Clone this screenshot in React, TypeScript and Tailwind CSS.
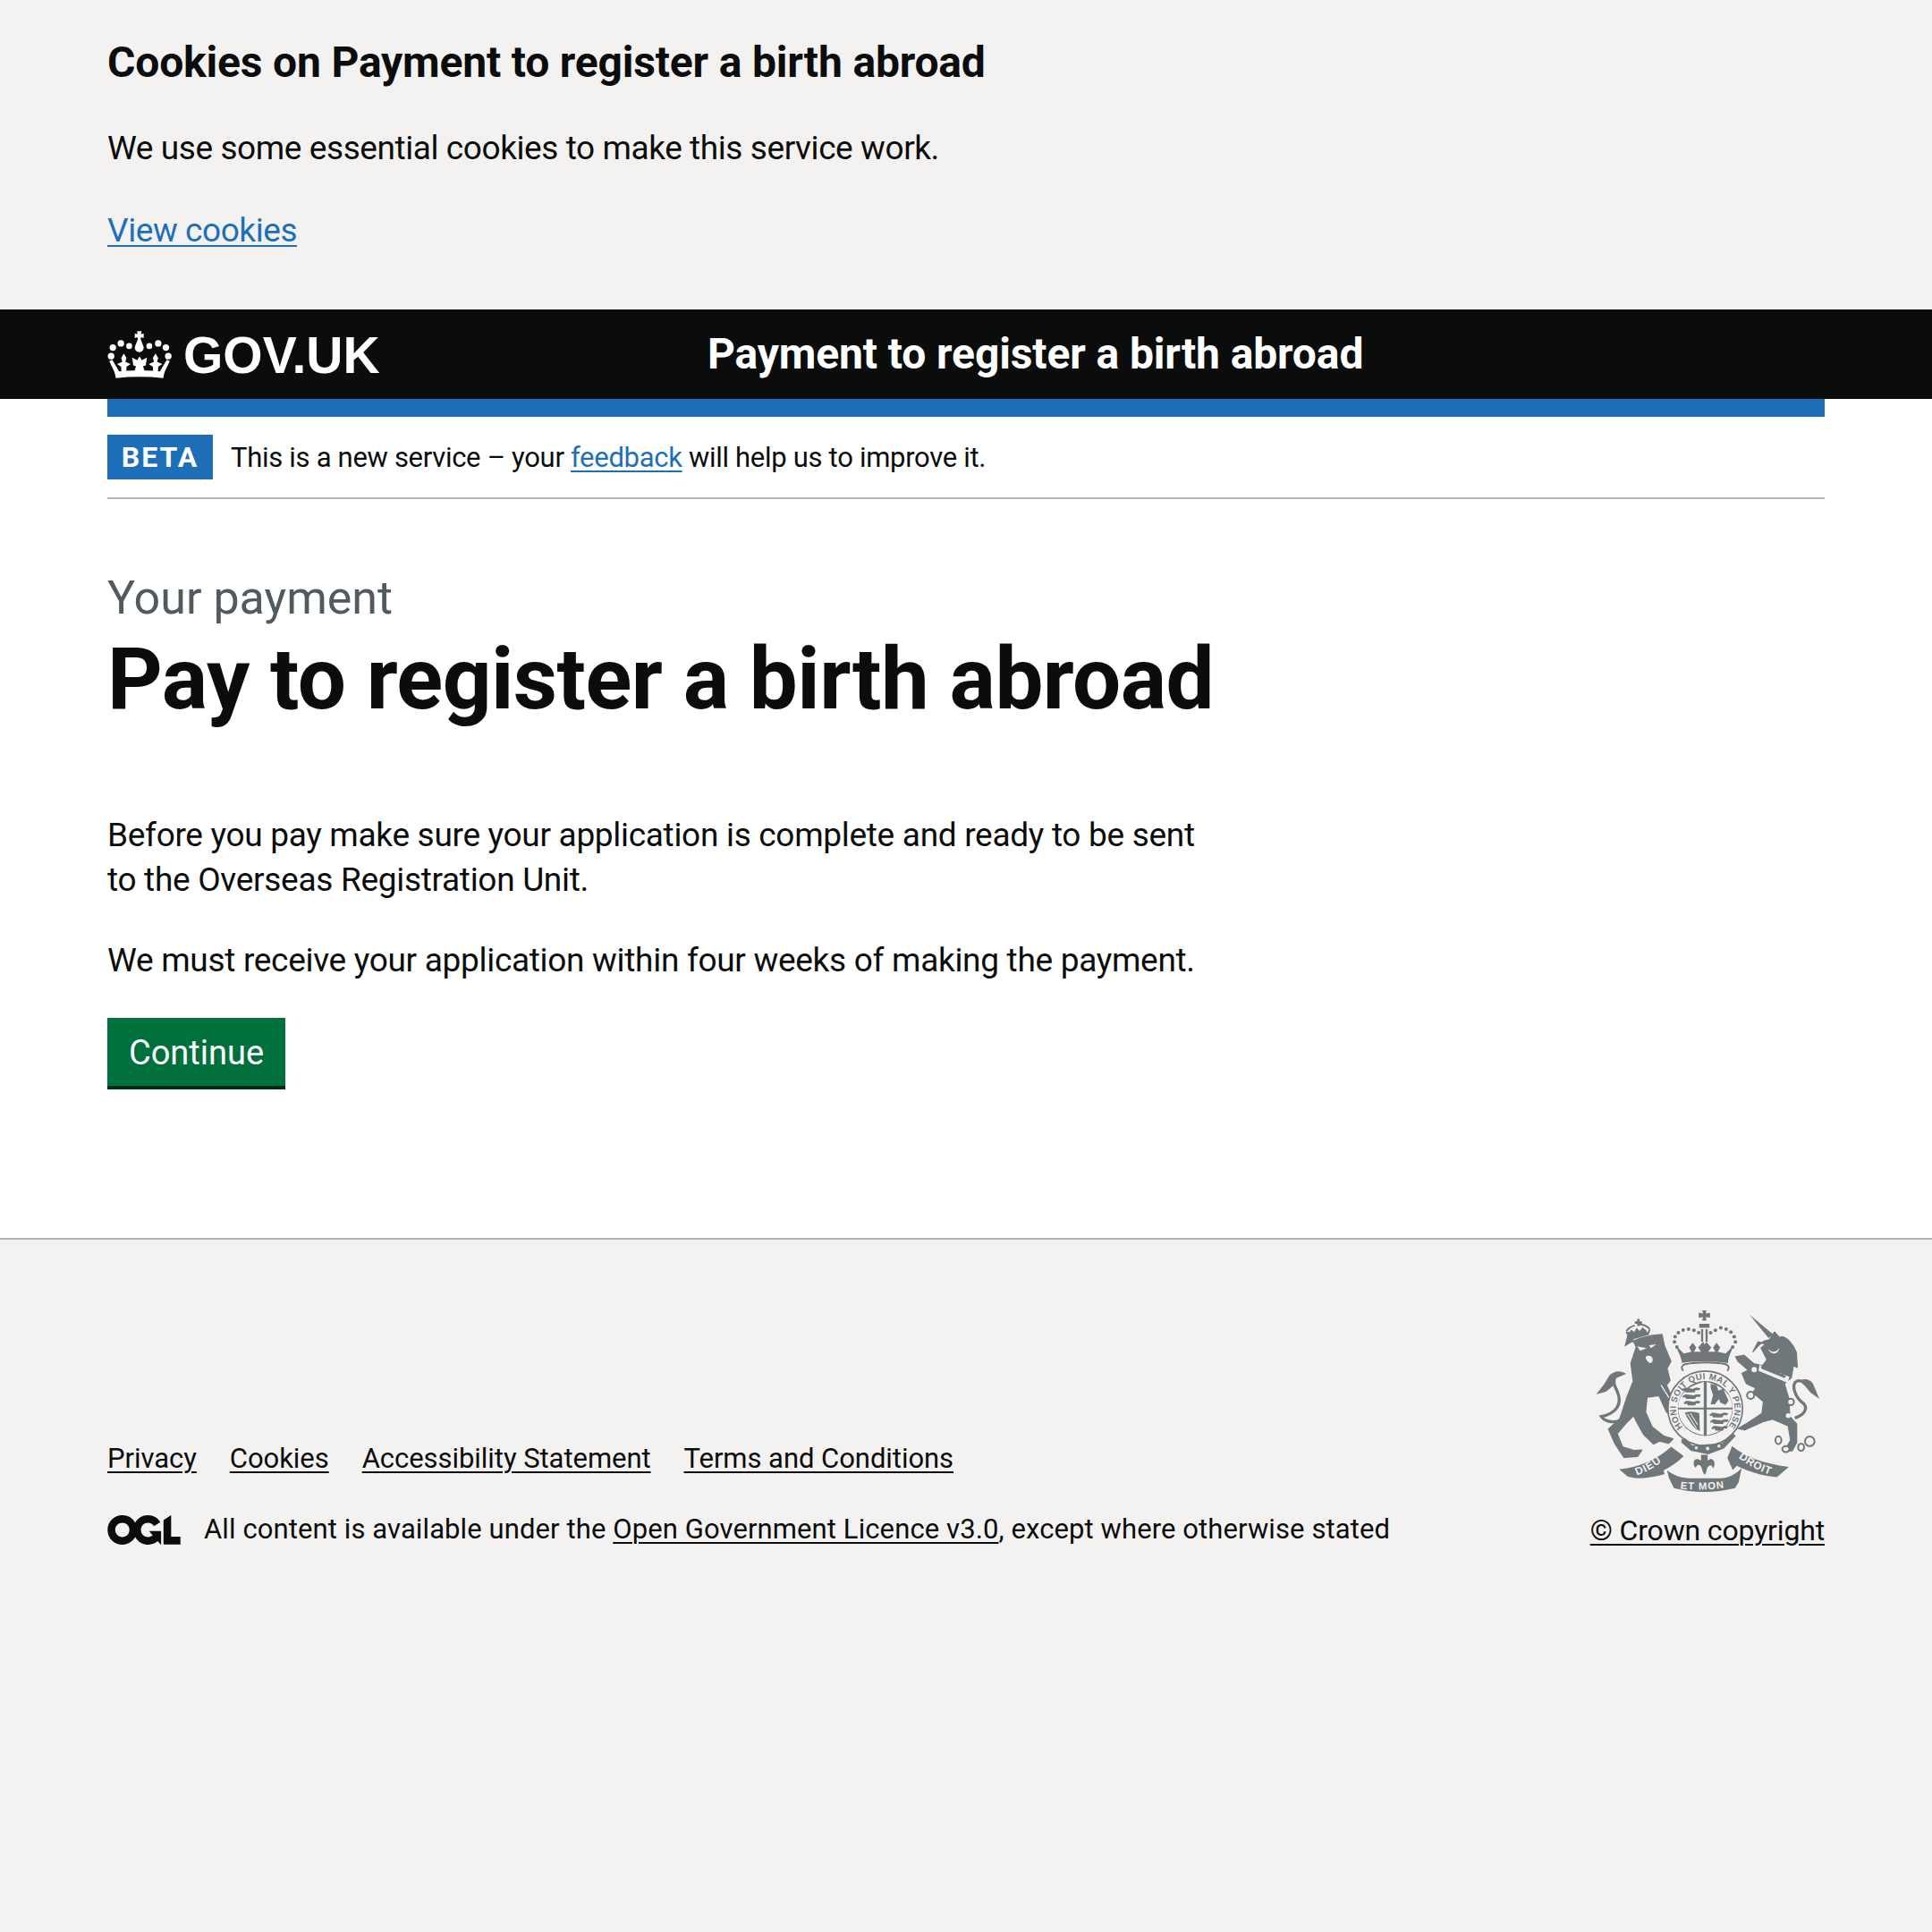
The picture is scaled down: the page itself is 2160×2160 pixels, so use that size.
const font = { fontFamily: 'Roboto, sans-serif' };

function Crown() {
  const fleur = (x: number) =>
    `M${x} 156l9 15-4 13 18 8-14 9-1 24h-16l-1-24-14-9 18-8-4-13z`;
  return (
    <svg viewBox="60 80 216 160" className="w-[72px] h-[53px] shrink-0" fill="currentColor">
      <path d="M160 81h15l-2 10 9-3v16l-9-3-1 8 8 20a15 15 0 1 1-26 0l8-20-1-8-9 3V88l9 3z" />
      <circle cx="72" cy="165" r="11" />
      <circle cx="265" cy="165" r="11" />
      <circle cx="78" cy="136" r="11" />
      <circle cx="257" cy="136" r="11" />
      <circle cx="105" cy="122" r="11" />
      <circle cx="231" cy="122" r="11" />
      <circle cx="133" cy="131" r="10" />
      <circle cx="201" cy="131" r="10" />
      <path d={fleur(115)} />
      <path d={fleur(222)} />
      <path d="M168 166l8 13 17-9-4 26-9 3 8 27h-40l8-27-9-3-4-26 17 9z" />
      <path d="M66 182l10-5 26 44-14 8zM270 182l-10-5-26 44 14 8z" />
      <path d="M84 218q84-10 168 0l-4 21q-80-8-160 0z" />
    </svg>
  );
}

function Ogl() {
  return (
    <svg viewBox="0 0 483.2 195.7" className="w-[82px] h-[33px] shrink-0 mr-[26px]" fill="currentColor">
      <path d="M421.5 142.8V.1l-50.7 32.3v161.1h112.4v-50.7zm-122.3-9.6A47.12 47.12 0 0 1 221 97.8c0-26 21.1-47.1 47.1-47.1 16.7 0 31.4 8.7 39.7 21.8l42.7-27.2A97.63 97.63 0 0 0 268.1 0c-36.5 0-68.3 20.1-85.1 49.7A98 98 0 0 0 97.8 0C43.9 0 0 43.9 0 97.8s43.9 97.8 97.8 97.8c36.5 0 68.3-20.1 85.1-49.7a97.76 97.76 0 0 0 149.6 25.4l19.4 22.2h3v-87.8h-80l24.3 27.5zM97.8 145c-26 0-47.1-21.1-47.1-47.1s21.1-47.1 47.1-47.1 47.2 21 47.2 47S123.8 145 97.8 145" />
    </svg>
  );
}

function Crest() {
  const c = "#6f777b";
  const bg = "#f3f2f1";
  const dots = [[345,172],[337,155],[339,138],[350,124],[366,115],[384,112],[402,116],[418,124],[458,124],[474,116],[492,108],[510,112],[526,122],[537,138],[541,155],[532,172]];
  const lionRows = (x: number, y: number) => (
    <g transform={`translate(${x} ${y})`}>
      <path d="M0 8l10-6 26 4 12-4 14 2-4 7-12 0-4 7-30 0-4-6-8 2z" />
      <path d="M2 30l10-6 26 4 12-4 14 2-4 7-12 0-4 7-30 0-4-6-8 2z" />
      <path d="M6 52l10-6 24 4 12-4 10 2-4 7-10 0-4 7-24 0-4-6-8 2z" />
    </g>
  );
  return (
    <svg viewBox="70 50 755 610" className="w-[252px] h-[204px] mr-[5px]" fill={c}>
      <defs>
        <path id="garter" d="M365 441A98 98 0 1 1 515 441" />
        <path id="dieu" d="M205 604Q265 585 320 535" />
        <path id="mon" d="M350 646Q437 656 526 640" />
        <path id="droit" d="M548 540Q600 582 668 604" />
      </defs>
      {/* Lion's crown */}
      <path d="M176 118c10-12 20-16 28-18M254 112c-8-10-20-14-34-16M176 120l12 26 60-17 6-16" fill="none" stroke={c} strokeWidth="6" />
      <path d="M204 86h8v-8h8v8h8v8h-8v8h-8v-8h-8zM184 128l8-14 10 8 8-14 10 10 10-12 12 10 6 12-62 18z" />
      {/* Lion */}
      <path strokeLinejoin="round" stroke={c} strokeWidth="4" d="M172 168C195 150 245 132 295 130l8 38 22 52-13 24 10 40-12 16 40 90-10 20-30-20-25-55-40 5-5 50 22 50 38 30 32 10-15 15-30-8-20 10-32-30-20-35-15-30-25 25-30 35 18 45 38 12 27-2-15 22-45 3-30-45-22-50 38-35 25-75 20-50-8-60 18-55-25-50z" />
      <path d="M212 170l32 6-22 9zM252 166l24-3-18 13zM240 205c8-6 24-4 24 10 0 8-6 14-12 10-6-4-12-14-12-20z" fill={bg} />
      <path d="M292 300l48 76" stroke={bg} strokeWidth="4" fill="none" />
      <path d="M172 410C140 430 105 425 92 405 140 395 165 365 145 320 128 290 130 265 160 262" fill="none" stroke={c} strokeWidth="10" />
      <path d="M175 262c-20-14-42-8-55 4l-18 30-27 34 32-8 25-20 8-25z" />
      {/* Unicorn */}
      <path d="M588 64l80 66-16 12z" />
      <path strokeLinejoin="round" stroke={c} strokeWidth="4" d="M600 188c15-18 30-38 55-40l17-26 16 18c22-10 47 25 57 50l3 50-13-5-7 40-23 20 15 50 3 60 23 25 0 62-15 28h-25l20-36-8-48-52-22-32 8-62 28-22-5 30-17 50-33 5-40-35-30 10-15-32-15-15-35 22-10-35-30-8-15 28-5 32 28 30 7 15-20-20-40 15-12-25-8z" />
      <path d="M650 178c14 12 24 16 38-2-2 18-24 28-38 2z" fill={bg} />
      <path d="M622 232l100 40-6 20-98-40z" fill={bg} />
      <path d="M626 240l8-10 6 6 8-6 4 8 8-2 4 10 10-2 4 10 10-2 4 10 10-2 2 8 8-2-6 10-76-30z" />
      <g fill={bg} stroke={c} strokeWidth="6">
        <circle cx="604" cy="248" r="12" />
        <circle cx="592" cy="334" r="12" />
        <circle cx="726" cy="356" r="11" />
        <ellipse cx="685" cy="484" rx="10" ry="13" />
        <ellipse cx="710" cy="514" rx="12" ry="10" />
        <ellipse cx="761" cy="508" rx="10" ry="12" />
        <circle cx="790" cy="488" r="16" />
      </g>
      <circle cx="718" cy="402" r="8" fill={bg} />
      <circle cx="695" cy="438" r="8" fill={bg} />
      <path d="M740 410c30-10 45-30 30-48-30-20-40-60-28-72 10-8 22-6 32 6" fill="none" stroke={c} strokeWidth="10" />
      <path d="M760 282c20-6 36 2 42 16l20 48-30-22-20-24z" />
      {/* Royal crown */}
      <path d="M430 48h14l-2 12 14-2v16l-14-2 2 12h-14l2-12-14 2V58l14 2zM420 94h34v14h-34zM426 112h7v42h-7zM441 112h7v42h-7z" />
      {dots.map(([x, y]) => (
        <circle key={`${x}-${y}`} cx={x} cy={y} r="6" />
      ))}
      <path d="M362 226c-2-24-16-40-18-56l24 24 26-6-8-14 12-16 12 16-8 14h24l-10-14 17-20 5 10 5-10 17 20-10 14h24l-8-14 12-16 12 16-8 14 26 6 24-24c-2 16-14 30-16 56-50-8-116-8-162 0z" />
      <path d="M366 252c-8-10-4-20 6-22 40-8 100-8 136 0 10 2 14 12 6 22" fill={bg} stroke={c} strokeWidth="6" />
      {/* Shield and garter */}
      <circle cx="440" cy="378" r="125" fill={bg} stroke={c} strokeWidth="5" />
      <circle cx="440" cy="378" r="92" fill={c} />
      <text fontFamily="'Liberation Sans', sans-serif" fontWeight="700" fontSize="29" fill={c}>
        <textPath href="#garter" textLength="440">HONI SOIT QUI MAL Y PENSE</textPath>
      </text>
      <path d="M435 289v86h-86q2-64 86-86zM445 289q84 22 86 86h-86zM349 381h86v87q-78-14-86-87zM445 381h86q-8 73-86 87z" fill={bg} />
      {lionRows(362, 306)}
      {lionRows(455, 390)}
      <path d="M458 296l20 4 6 18 16-6 18 40-10 14-18-8-4-12-14 18-14 0 8-30-8-26z" />
      <path d="M372 392q24-8 48 2l2 60q-36-16-50-62z" />
      <path d="M380 396l30 48M390 394l24 38M374 404l26 38" stroke={bg} strokeWidth="3" fill="none" />
      <path d="M360 482q10-10 18 0l18 20 100-8 36-34 10 10-40 42-52 20-58-12-32-28z" />
      <circle cx="410" cy="510" r="5" fill={bg} />
      <circle cx="448" cy="512" r="6" fill={bg} />
      <circle cx="486" cy="504" r="5" fill={bg} />
      {/* Fleur de lis */}
      <path d="M426 533h22v20c20-18 30 12 18 26-4-16-14-12-20 0-2 8-2 14-8 22-6-8-8-14-10-24-6-12-14-14-20 0-14-14-6-42 18-24z" />
      {/* Scrolls */}
      <path d="M152 582c70-8 130-36 174-76l42 32c-20 20-44 36-68 48l4 12c-46 14-92 18-124 8z" />
      <path d="M530 504c40 34 100 58 190 70l-40 34c-50-4-100-20-134-38l-14 14-18-40z" />
      <path d="M312 585C330 600 360 612 390 612h100c30 0 55-17 72-34l-10 47-12 20c-70 17-140 17-205 0l-17-35z" />
      <g fontFamily="'Liberation Sans', sans-serif" fontWeight="700" fontSize="36" fill={bg}>
        <text letterSpacing="3"><textPath href="#dieu" startOffset="6">DIEU</textPath></text>
        <text letterSpacing="3" fontSize="34"><textPath href="#mon" startOffset="6">ET MON</textPath></text>
        <text letterSpacing="2"><textPath href="#droit" startOffset="4">DROIT</textPath></text>
      </g>
    </svg>
  );
}

export default function App() {
  return (
    <div className="min-h-[2160px] flex flex-col bg-white text-[#0b0c0c]" style={font}>
      <section className="bg-[#f3f2f1] h-[346px] px-[120px] pt-[40px]">
        <h2 className="text-[48px] leading-[60px] font-bold tracking-[-0.18px]">Cookies on Payment to register a birth abroad</h2>
        <p className="text-[37px] leading-[50px] mt-[41px] tracking-[-0.42px]">We use some essential cookies to make this service work.</p>
        <a className="block text-[37px] leading-[50px] mt-[42px] text-[#1d70b8] underline underline-offset-[4px] decoration-[2px] tracking-[-0.42px]">View cookies</a>
      </section>

      <header className="bg-[#0b0c0c] h-[100px] px-[120px] flex items-center text-white">
        <div className="w-[671px] flex items-center gap-[13px]">
          <Crown />
          <span className="text-[57px] font-bold leading-none mt-[2px]" style={{ fontFamily: '"Liberation Sans", sans-serif' }}>GOV.UK</span>
        </div>
        <span className="text-[48px] font-bold tracking-[-0.12px]">Payment to register a birth abroad</span>
      </header>

      <main className="px-[120px]">
        <div className="h-[20px] bg-[#1d70b8]" />
        <div className="h-[92px] pt-[20px] flex items-start border-b-2 border-[#b1b4b6]">
          <span className="w-[118px] h-[50px] bg-[#1d70b8] text-white text-[32px] font-bold tracking-[2px] flex items-center justify-center">BETA</span>
          <p className="ml-[20px] pt-[1px] text-[31px] leading-[50px] tracking-[-0.3px]">
            This is a new service – your <a className="text-[#1d70b8] underline underline-offset-[4px] decoration-[2px]">feedback</a> will help us to improve it.
          </p>
        </div>

        <div className="pt-[81px]">
          <span className="block text-[52px] leading-[60px] text-[#505a5f]">Your payment</span>
          <h1 className="text-[96px] leading-[100px] font-bold mt-[10px] tracking-[-0.55px]">Pay to register a birth abroad</h1>
          <p className="text-[37px] leading-[50px] mt-[100px] tracking-[-0.3px]">Before you pay make sure your application is complete and ready to be sent<br />to the Overseas Registration Unit.</p>
          <p className="text-[37px] leading-[50px] mt-[40px] tracking-[-0.3px]">We must receive your application within four weeks of making the payment.</p>
          <button className="block mt-[39px] w-[199px] h-[80px] pt-[3px] bg-[#00703c] text-white text-[38px] border-b-[4px] border-[#002d18]">Continue</button>
        </div>
      </main>

      <footer className="mt-[166px] flex-1 bg-[#f3f2f1] border-t-2 border-[#b1b4b6] px-[120px] pt-[79px]">
        <div className="flex justify-between items-end">
          <div className="pb-[1px]">
            <ul className="flex gap-[37px] text-[31px] leading-[40px] underline underline-offset-[4px] decoration-[2px] tracking-[-0.05px]">
              <li>Privacy</li>
              <li>Cookies</li>
              <li>Accessibility Statement</li>
              <li>Terms and Conditions</li>
            </ul>
            <div className="flex items-center mt-[39px] text-[31px] leading-[40px] tracking-[0.1px]">
              <Ogl />
              <span>All content is available under the <a className="underline underline-offset-[4px] decoration-[2px]">Open Government Licence v3.0</a>, except where otherwise stated</span>
            </div>
          </div>
          <div className="flex flex-col items-end">
            <Crest />
            <a className="mt-[22px] text-[32px] leading-[40px] underline underline-offset-[4px] decoration-[2px] tracking-[-0.16px]">© Crown copyright</a>
          </div>
        </div>
      </footer>
    </div>
  );
}
